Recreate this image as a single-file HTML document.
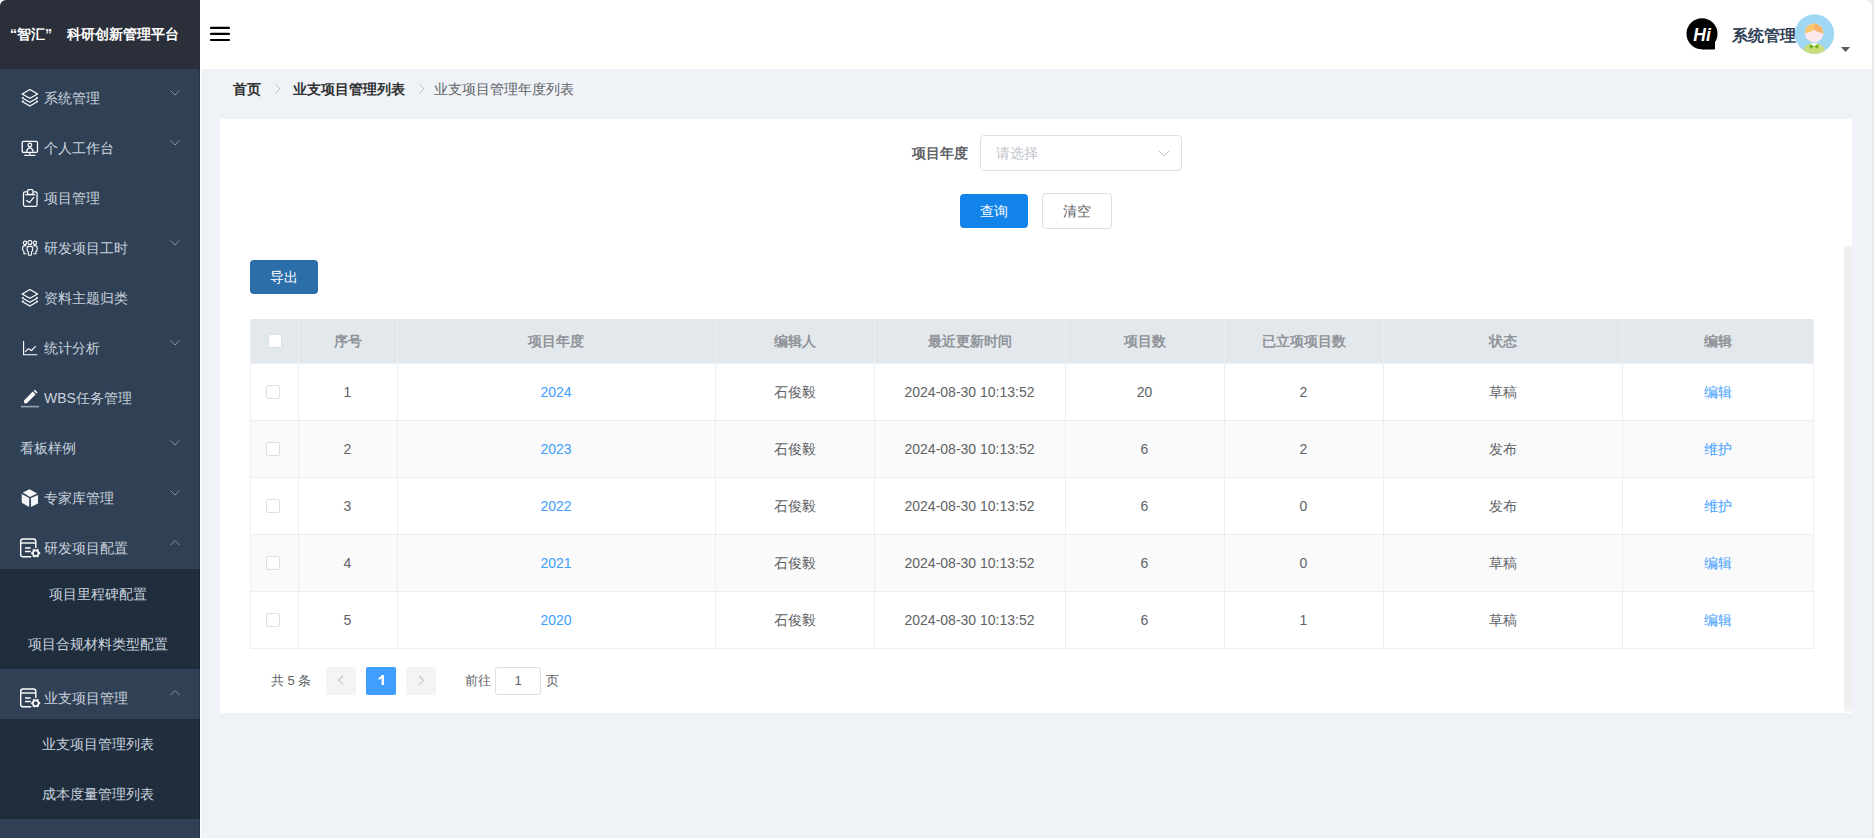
<!DOCTYPE html>
<html><head><meta charset="utf-8">
<style>
*{box-sizing:border-box;margin:0;padding:0}
html,body{width:1875px;height:838px;overflow:hidden}
body{font-family:"Liberation Sans",sans-serif;font-size:14px;background:#eff2f6;position:relative;color:#606266}
.abs{position:absolute}
.t{color:#c9d2dd;line-height:50px;white-space:nowrap;font-size:14px}
.st{left:0;width:195px;text-align:center}
.th{text-align:center;font-weight:bold;color:#909399;white-space:nowrap}
.td{text-align:center;color:#606266;white-space:nowrap}
.link{color:#409eff}
.bc{line-height:40px;white-space:nowrap;font-size:14px}
</style></head><body>
<div class="abs" style="left:0;top:0;width:200px;height:838px;background:#304156"></div>
<div class="abs" style="left:0;top:0;width:10px;height:10px;background:#fff"></div><div class="abs" style="left:0;top:0;width:200px;height:69px;background:#2b2f3a;border-top-left-radius:6px"></div>
<div class="abs" style="left:10px;top:0;line-height:68px;color:#fff;font-weight:bold;white-space:nowrap">“智汇”</div><div class="abs" style="left:67px;top:0;line-height:68px;color:#fff;font-weight:bold;white-space:nowrap">科研创新管理平台</div>
<div class="abs" style="left:200px;top:69px;width:1px;height:769px;background:#fff"></div>
<div class="abs t" style="left:44px;top:73px">系统管理</div><svg class="abs" style="left:21px;top:89px" width="18" height="19" viewBox="0 0 18 19" ><g fill="none" stroke="#fff" stroke-width="1.2" stroke-linejoin="round"><path d="M8.9 0.5 L16.6 4.9 L8.9 9.3 L1.2 4.9 Z"/><path d="M2.6 8.2 L1.2 9 L8.9 13.3 L16.6 9 L15.2 8.2"/><path d="M2.6 11.8 L1.2 12.6 L8.9 16.9 L16.6 12.6 L15.2 11.8"/></g></svg><svg class="abs" style="left:169.5px;top:89.5px" width="10" height="6" viewBox="0 0 10 6" ><path d="M0.5 0.5 L5 5 L9.5 0.5" fill="none" stroke="#8192a6" stroke-width="1"/></svg><div class="abs t" style="left:44px;top:123px">个人工作台</div><svg class="abs" style="left:21px;top:140px" width="18" height="17" viewBox="0 0 18 17" ><g fill="none" stroke="#fff" stroke-width="1.3"><rect x="1.2" y="1.3" width="15.3" height="11" rx="1.3"/><circle cx="8.85" cy="5" r="1.8"/><path d="M5.4 11.8 Q6.4 8.3 8.85 7.6 Q11.3 8.3 12.3 11.8"/><path d="M8.85 12.5 V14.6"/><path d="M3.2 15.3 H14.5" stroke-width="1.2"/></g></svg><svg class="abs" style="left:169.5px;top:139.5px" width="10" height="6" viewBox="0 0 10 6" ><path d="M0.5 0.5 L5 5 L9.5 0.5" fill="none" stroke="#8192a6" stroke-width="1"/></svg><div class="abs t" style="left:44px;top:173px">项目管理</div><svg class="abs" style="left:22px;top:189px" width="17" height="19" viewBox="0 0 17 19" ><g fill="none" stroke="#fff" stroke-width="1.25" stroke-linejoin="round"><path d="M5.6 2.85 H3 Q1.5 2.85 1.5 4.35 V15.85 Q1.5 17.35 3 17.35 H13.55 Q15.05 17.35 15.05 15.85 V4.35 Q15.05 2.85 13.55 2.85 H11"/><rect x="5.6" y="0.65" width="5.4" height="4.6" rx="1"/><path d="M3.2 5.7 H13.2"/><path d="M4.2 11.3 L7.5 13.6 L11.9 8.1"/></g></svg><div class="abs t" style="left:44px;top:223px">研发项目工时</div><svg class="abs" style="left:22px;top:240px" width="17" height="17" viewBox="0 0 17 17" ><g fill="none" stroke="#fff" stroke-width="1.1"><circle cx="3" cy="2.8" r="1.7"/><circle cx="7.9" cy="2.5" r="2"/><circle cx="12.9" cy="2.8" r="1.7"/><path d="M6.6 15.3 L6.2 12 Q5 10.8 5 8.8 Q5 6.1 7.9 6.1 Q10.8 6.1 10.8 8.8 Q10.8 10.8 9.6 12 L9.2 15.3 Z"/><path d="M4.5 6 Q3.8 5.6 3 5.6 Q0.5 5.6 0.5 8.5 Q0.5 10.5 1.9 11.6 V13.7 H4.6"/><path d="M11.3 6 Q12 5.6 12.8 5.6 Q15.3 5.6 15.3 8.5 Q15.3 10.5 13.9 11.6 V13.7 H11.2"/></g></svg><svg class="abs" style="left:169.5px;top:239.5px" width="10" height="6" viewBox="0 0 10 6" ><path d="M0.5 0.5 L5 5 L9.5 0.5" fill="none" stroke="#8192a6" stroke-width="1"/></svg><div class="abs t" style="left:44px;top:273px">资料主题归类</div><svg class="abs" style="left:21px;top:289px" width="18" height="19" viewBox="0 0 18 19" ><g fill="none" stroke="#fff" stroke-width="1.2" stroke-linejoin="round"><path d="M8.9 0.5 L16.6 4.9 L8.9 9.3 L1.2 4.9 Z"/><path d="M2.6 8.2 L1.2 9 L8.9 13.3 L16.6 9 L15.2 8.2"/><path d="M2.6 11.8 L1.2 12.6 L8.9 16.9 L16.6 12.6 L15.2 11.8"/></g></svg><div class="abs t" style="left:44px;top:323px">统计分析</div><svg class="abs" style="left:23px;top:341px" width="15" height="15" viewBox="0 0 15 15" ><g fill="none" stroke="#fff" stroke-width="1.15"><path d="M0.6 0 V13.7 H14.2"/><path d="M2.2 10.9 L5.4 7.7 L8.6 9.5 L12.7 5.2"/></g></svg><svg class="abs" style="left:169.5px;top:339.5px" width="10" height="6" viewBox="0 0 10 6" ><path d="M0.5 0.5 L5 5 L9.5 0.5" fill="none" stroke="#8192a6" stroke-width="1"/></svg><div class="abs t" style="left:44px;top:373px">WBS任务管理</div><svg class="abs" style="left:21px;top:390px" width="18" height="18" viewBox="0 0 18 18" ><path fill="#fff" d="M3.2 13.2 L3 10.4 L11.8 1.6 L14.6 4.4 L5.8 13.2 Z"/><path fill="#fff" d="M12.6 0.8 L13.6 0 Q14 -0.2 14.4 0.2 L16.2 2 Q16.6 2.4 16.2 2.8 L15.4 3.6 Z"/><rect x="0" y="15.8" width="18" height="1.6" fill="#9aa5b1"/></svg><div class="abs t" style="left:20px;top:423px">看板样例</div><svg class="abs" style="left:169.5px;top:439.5px" width="10" height="6" viewBox="0 0 10 6" ><path d="M0.5 0.5 L5 5 L9.5 0.5" fill="none" stroke="#8192a6" stroke-width="1"/></svg><div class="abs t" style="left:44px;top:473px">专家库管理</div><svg class="abs" style="left:21px;top:489px" width="18" height="19" viewBox="0 0 18 19" ><path fill="#f4f5f7" d="M8.5 0.2 L16.2 4.6 L9 8 L1.8 3.6 Z"/><path fill="#f4f5f7" d="M0.7 5 L8.3 9 L8.1 18 L0.8 13.8 Z"/><path fill="#f4f5f7" d="M9.9 9 L17 5.9 L17 14.4 L10 18 Z"/></svg><svg class="abs" style="left:169.5px;top:489.5px" width="10" height="6" viewBox="0 0 10 6" ><path d="M0.5 0.5 L5 5 L9.5 0.5" fill="none" stroke="#8192a6" stroke-width="1"/></svg><div class="abs t" style="left:44px;top:523px">研发项目配置</div><svg class="abs" style="left:20px;top:538px" width="22" height="21" viewBox="0 0 22 21" ><g fill="none" stroke="#fff" stroke-width="1.4"><path d="M11.2 18.7 H3 Q0.7 18.7 0.7 16.4 V3.3 Q0.7 1 3 1 H13.5 Q15.8 1 15.8 3.3 V10"/><path d="M0.7 5 H15.8"/><path d="M5 10 H10.7 M5 13.5 H10.7"/></g><circle cx="15.7" cy="15.2" r="2.8" fill="none" stroke="#fff" stroke-width="1.7"/><path d="M18.90 15.20 L20.20 15.20" stroke="#fff" stroke-width="2"/><path d="M17.30 17.97 L17.95 19.10" stroke="#fff" stroke-width="2"/><path d="M14.10 17.97 L13.45 19.10" stroke="#fff" stroke-width="2"/><path d="M12.50 15.20 L11.20 15.20" stroke="#fff" stroke-width="2"/><path d="M14.10 12.43 L13.45 11.30" stroke="#fff" stroke-width="2"/><path d="M17.30 12.43 L17.95 11.30" stroke="#fff" stroke-width="2"/></svg><svg class="abs" style="left:169.5px;top:540px" width="10" height="6" viewBox="0 0 10 6" ><path d="M0.5 5 L5 0.5 L9.5 5" fill="none" stroke="#8192a6" stroke-width="1"/></svg><div class="abs" style="left:0;top:569px;width:200px;height:100px;background:#1f2d3d"></div><div class="abs t st" style="top:569px">项目里程碑配置</div><div class="abs t st" style="top:619px">项目合规材料类型配置</div><div class="abs t" style="left:44px;top:673px">业支项目管理</div><svg class="abs" style="left:20px;top:688px" width="22" height="21" viewBox="0 0 22 21" ><g fill="none" stroke="#fff" stroke-width="1.4"><path d="M11.2 18.7 H3 Q0.7 18.7 0.7 16.4 V3.3 Q0.7 1 3 1 H13.5 Q15.8 1 15.8 3.3 V10"/><path d="M0.7 5 H15.8"/><path d="M5 10 H10.7 M5 13.5 H10.7"/></g><circle cx="15.7" cy="15.2" r="2.8" fill="none" stroke="#fff" stroke-width="1.7"/><path d="M18.90 15.20 L20.20 15.20" stroke="#fff" stroke-width="2"/><path d="M17.30 17.97 L17.95 19.10" stroke="#fff" stroke-width="2"/><path d="M14.10 17.97 L13.45 19.10" stroke="#fff" stroke-width="2"/><path d="M12.50 15.20 L11.20 15.20" stroke="#fff" stroke-width="2"/><path d="M14.10 12.43 L13.45 11.30" stroke="#fff" stroke-width="2"/><path d="M17.30 12.43 L17.95 11.30" stroke="#fff" stroke-width="2"/></svg><svg class="abs" style="left:169.5px;top:690px" width="10" height="6" viewBox="0 0 10 6" ><path d="M0.5 5 L5 0.5 L9.5 5" fill="none" stroke="#8192a6" stroke-width="1"/></svg><div class="abs" style="left:0;top:719px;width:200px;height:100px;background:#1f2d3d"></div><div class="abs t st" style="top:719px">业支项目管理列表</div><div class="abs t st" style="top:769px">成本度量管理列表</div>
<div class="abs" style="left:199px;top:69px;width:1px;height:769px;background:rgba(0,8,25,0.22)"></div>
<div class="abs" style="left:1860px;top:0;width:12px;height:12px;background:#ececec"></div><div class="abs" style="left:200px;top:0;width:1672px;height:69px;background:#fff;border-top-right-radius:7px"></div>
<svg class="abs" style="left:209px;top:24px" width="22" height="20" viewBox="0 0 22 20"><g stroke="#000" stroke-width="2.1" stroke-linecap="round"><path d="M2 3.9 H20 M2 9.9 H20 M2 16 H20"/></g></svg>
<div class="abs" style="left:1872px;top:0;width:1px;height:838px;background:#e5e5e5"></div><div class="abs" style="left:1873px;top:0;width:1px;height:838px;background:#efefef"></div><div class="abs" style="left:1874px;top:0;width:1px;height:838px;background:#f7f7f7"></div>
<!-- breadcrumb -->
<div class="abs bc" style="left:233px;top:69px;font-weight:bold;color:#303133">首页</div>
<svg class="abs" style="left:274px;top:83px" width="7" height="12" viewBox="0 0 7 12"><path d="M1 1 L6 6 L1 11" fill="none" stroke="#c0c4cc" stroke-width="1"/></svg>
<div class="abs bc" style="left:293px;top:69px;font-weight:bold;color:#303133">业支项目管理列表</div>
<svg class="abs" style="left:418px;top:83px" width="7" height="12" viewBox="0 0 7 12"><path d="M1 1 L6 6 L1 11" fill="none" stroke="#c0c4cc" stroke-width="1"/></svg>
<div class="abs bc" style="left:434px;top:69px;color:#606266">业支项目管理年度列表</div>
<!-- card -->
<div class="abs" style="left:220px;top:119px;width:1632px;height:594px;background:#fff"></div>
<div class="abs" style="left:1844px;top:245px;width:8px;height:467px;background:#f0f0f0;border-radius:4px"></div>
<!-- form -->
<div class="abs" style="left:912px;top:135px;line-height:36px;font-weight:bold;color:#606266">项目年度</div>
<div class="abs" style="left:980px;top:135px;width:202px;height:36px;border:1px solid #dcdfe6;border-radius:4px"></div>
<div class="abs" style="left:996px;top:135px;line-height:36px;color:#c0c4cc">请选择</div>
<svg class="abs" style="left:1158px;top:149.5px" width="12" height="8" viewBox="0 0 12 8"><path d="M1 1 L6 6 L11 1" fill="none" stroke="#c0c4cc" stroke-width="1"/></svg>
<div class="abs" style="left:960px;top:194px;width:68px;height:34px;background:#1283e9;border-radius:4px;color:#fff;text-align:center;line-height:34px">查询</div>
<div class="abs" style="left:1042px;top:193px;width:70px;height:36px;border:1px solid #dcdfe6;border-radius:4px;color:#606266;text-align:center;line-height:34px">清空</div>
<div class="abs" style="left:250px;top:260px;width:68px;height:34px;background:#2c6ea9;border-radius:4px;color:#fff;text-align:center;line-height:34px">导出</div>
<div class="abs" style="left:250px;top:319px;width:1563px;height:44px;background:#e3e8ec"></div><div class="abs" style="left:250px;top:363px;width:1563px;height:57px;background:#fff;border-top:1px solid #ebeef5"></div><div class="abs" style="left:250px;top:420px;width:1563px;height:57px;background:#fafafa;border-top:1px solid #ebeef5"></div><div class="abs" style="left:250px;top:477px;width:1563px;height:57px;background:#fff;border-top:1px solid #ebeef5"></div><div class="abs" style="left:250px;top:534px;width:1563px;height:57px;background:#fafafa;border-top:1px solid #ebeef5"></div><div class="abs" style="left:250px;top:591px;width:1563px;height:57px;background:#fff;border-top:1px solid #ebeef5"></div><div class="abs" style="left:250px;top:319px;width:1564px;height:330px;border:1px solid #ebeef5;border-top:none"></div><div class="abs" style="left:298px;top:319px;width:1px;height:330px;background:#ebeef5"></div><div class="abs" style="left:397px;top:319px;width:1px;height:330px;background:#ebeef5"></div><div class="abs" style="left:715px;top:319px;width:1px;height:330px;background:#ebeef5"></div><div class="abs" style="left:874px;top:319px;width:1px;height:330px;background:#ebeef5"></div><div class="abs" style="left:1065px;top:319px;width:1px;height:330px;background:#ebeef5"></div><div class="abs" style="left:1224px;top:319px;width:1px;height:330px;background:#ebeef5"></div><div class="abs" style="left:1383px;top:319px;width:1px;height:330px;background:#ebeef5"></div><div class="abs" style="left:1622px;top:319px;width:1px;height:330px;background:#ebeef5"></div><div class="abs" style="left:268px;top:334px;width:14px;height:14px;background:#fff;border:1px solid #dcdfe6;border-radius:2px"></div><div class="abs th" style="left:298px;top:319px;width:99px;height:44px;line-height:44px">序号</div><div class="abs th" style="left:397px;top:319px;width:318px;height:44px;line-height:44px">项目年度</div><div class="abs th" style="left:715px;top:319px;width:159px;height:44px;line-height:44px">编辑人</div><div class="abs th" style="left:874px;top:319px;width:191px;height:44px;line-height:44px">最近更新时间</div><div class="abs th" style="left:1065px;top:319px;width:159px;height:44px;line-height:44px">项目数</div><div class="abs th" style="left:1224px;top:319px;width:159px;height:44px;line-height:44px">已立项项目数</div><div class="abs th" style="left:1383px;top:319px;width:239px;height:44px;line-height:44px">状态</div><div class="abs th" style="left:1622px;top:319px;width:191px;height:44px;line-height:44px">编辑</div><div class="abs" style="left:266px;top:385px;width:14px;height:14px;background:#fff;border:1px solid #dcdfe6;border-radius:2px"></div><div class="abs td" style="left:298px;top:364px;width:99px;height:56px;line-height:56px">1</div><div class="abs td link" style="left:397px;top:364px;width:318px;height:56px;line-height:56px">2024</div><div class="abs td" style="left:715px;top:364px;width:159px;height:56px;line-height:56px">石俊毅</div><div class="abs td" style="left:874px;top:364px;width:191px;height:56px;line-height:56px">2024-08-30 10:13:52</div><div class="abs td" style="left:1065px;top:364px;width:159px;height:56px;line-height:56px">20</div><div class="abs td" style="left:1224px;top:364px;width:159px;height:56px;line-height:56px">2</div><div class="abs td" style="left:1383px;top:364px;width:239px;height:56px;line-height:56px">草稿</div><div class="abs td link" style="left:1622px;top:364px;width:191px;height:56px;line-height:56px">编辑</div><div class="abs" style="left:266px;top:442px;width:14px;height:14px;background:#fff;border:1px solid #dcdfe6;border-radius:2px"></div><div class="abs td" style="left:298px;top:421px;width:99px;height:56px;line-height:56px">2</div><div class="abs td link" style="left:397px;top:421px;width:318px;height:56px;line-height:56px">2023</div><div class="abs td" style="left:715px;top:421px;width:159px;height:56px;line-height:56px">石俊毅</div><div class="abs td" style="left:874px;top:421px;width:191px;height:56px;line-height:56px">2024-08-30 10:13:52</div><div class="abs td" style="left:1065px;top:421px;width:159px;height:56px;line-height:56px">6</div><div class="abs td" style="left:1224px;top:421px;width:159px;height:56px;line-height:56px">2</div><div class="abs td" style="left:1383px;top:421px;width:239px;height:56px;line-height:56px">发布</div><div class="abs td link" style="left:1622px;top:421px;width:191px;height:56px;line-height:56px">维护</div><div class="abs" style="left:266px;top:499px;width:14px;height:14px;background:#fff;border:1px solid #dcdfe6;border-radius:2px"></div><div class="abs td" style="left:298px;top:478px;width:99px;height:56px;line-height:56px">3</div><div class="abs td link" style="left:397px;top:478px;width:318px;height:56px;line-height:56px">2022</div><div class="abs td" style="left:715px;top:478px;width:159px;height:56px;line-height:56px">石俊毅</div><div class="abs td" style="left:874px;top:478px;width:191px;height:56px;line-height:56px">2024-08-30 10:13:52</div><div class="abs td" style="left:1065px;top:478px;width:159px;height:56px;line-height:56px">6</div><div class="abs td" style="left:1224px;top:478px;width:159px;height:56px;line-height:56px">0</div><div class="abs td" style="left:1383px;top:478px;width:239px;height:56px;line-height:56px">发布</div><div class="abs td link" style="left:1622px;top:478px;width:191px;height:56px;line-height:56px">维护</div><div class="abs" style="left:266px;top:556px;width:14px;height:14px;background:#fff;border:1px solid #dcdfe6;border-radius:2px"></div><div class="abs td" style="left:298px;top:535px;width:99px;height:56px;line-height:56px">4</div><div class="abs td link" style="left:397px;top:535px;width:318px;height:56px;line-height:56px">2021</div><div class="abs td" style="left:715px;top:535px;width:159px;height:56px;line-height:56px">石俊毅</div><div class="abs td" style="left:874px;top:535px;width:191px;height:56px;line-height:56px">2024-08-30 10:13:52</div><div class="abs td" style="left:1065px;top:535px;width:159px;height:56px;line-height:56px">6</div><div class="abs td" style="left:1224px;top:535px;width:159px;height:56px;line-height:56px">0</div><div class="abs td" style="left:1383px;top:535px;width:239px;height:56px;line-height:56px">草稿</div><div class="abs td link" style="left:1622px;top:535px;width:191px;height:56px;line-height:56px">编辑</div><div class="abs" style="left:266px;top:613px;width:14px;height:14px;background:#fff;border:1px solid #dcdfe6;border-radius:2px"></div><div class="abs td" style="left:298px;top:592px;width:99px;height:56px;line-height:56px">5</div><div class="abs td link" style="left:397px;top:592px;width:318px;height:56px;line-height:56px">2020</div><div class="abs td" style="left:715px;top:592px;width:159px;height:56px;line-height:56px">石俊毅</div><div class="abs td" style="left:874px;top:592px;width:191px;height:56px;line-height:56px">2024-08-30 10:13:52</div><div class="abs td" style="left:1065px;top:592px;width:159px;height:56px;line-height:56px">6</div><div class="abs td" style="left:1224px;top:592px;width:159px;height:56px;line-height:56px">1</div><div class="abs td" style="left:1383px;top:592px;width:239px;height:56px;line-height:56px">草稿</div><div class="abs td link" style="left:1622px;top:592px;width:191px;height:56px;line-height:56px">编辑</div>
<!-- pagination -->
<div class="abs" style="left:271px;top:667px;line-height:28px;font-size:13px;color:#606266;white-space:nowrap">共 5 条</div>
<div class="abs" style="left:326px;top:667px;width:30px;height:28px;background:#f4f4f5;border-radius:2px"></div>
<svg class="abs" style="left:336.7px;top:674.8px" width="7" height="11" viewBox="0 0 7 11"><path d="M6 1 L1.5 5.3 L6 9.6" fill="none" stroke="#c0c4cc" stroke-width="1.1"/></svg>
<div class="abs" style="left:366px;top:667px;width:30px;height:28px;background:#409eff;border-radius:2px"></div><svg class="abs" style="left:366px;top:667px" width="30" height="28" viewBox="0 0 30 28"><path d="M15.6 8 H18 V18 H15.6 V11.3 Q14.3 12.5 12.6 13.1 V10.9 Q14.6 10.1 15.6 8 Z" fill="#fff"/></svg>
<div class="abs" style="left:406px;top:667px;width:30px;height:28px;background:#f4f4f5;border-radius:2px"></div>
<svg class="abs" style="left:418px;top:674.8px" width="7" height="11" viewBox="0 0 7 11"><path d="M1 1 L5.5 5.3 L1 9.6" fill="none" stroke="#c0c4cc" stroke-width="1.1"/></svg>
<div class="abs" style="left:465px;top:667px;line-height:28px;font-size:13px;color:#606266">前往</div>
<div class="abs" style="left:495px;top:667px;width:46px;height:28px;border:1px solid #dcdfe6;border-radius:3px;text-align:center;line-height:26px;font-size:13px;color:#606266">1</div>
<div class="abs" style="left:546px;top:667px;line-height:28px;font-size:13px;color:#606266">页</div>
<!-- header right -->
<svg class="abs" style="left:1686px;top:18px" width="33" height="33" viewBox="0 0 33 33"><circle cx="16" cy="15.7" r="15.5" fill="#000"/><path d="M16 24 H29 V30.6 Q29 31.5 28.1 31.5 H16 Z" fill="#000"/><text x="16" y="22.6" text-anchor="middle" font-family="Liberation Sans" font-weight="bold" font-style="italic" font-size="17.5" fill="#fff">Hi</text></svg>
<div class="abs" style="left:1732px;top:19px;line-height:34px;font-size:16px;font-weight:bold;color:#304156;white-space:nowrap">系统管理</div>
<svg class="abs" style="left:1794px;top:14px" width="41" height="41" viewBox="0 0 41 41"><defs><clipPath id="avc"><circle cx="20.5" cy="20" r="19.7"/></clipPath><clipPath id="facec"><circle cx="20.1" cy="18.9" r="9.3"/></clipPath></defs><circle cx="20.5" cy="20" r="19.7" fill="#a0d7f3"/><g clip-path="url(#avc)"><path d="M8.9 41 V38 Q9.8 29.2 20.1 29.2 Q30.4 29.2 31.3 38 V41 Z" fill="#c9df7b"/><path d="M16.3 29.3 L20.1 32.6 L23.9 29.3 Z" fill="#fff"/><path d="M15.8 30.3 L20.1 32.6 L15.8 34.9 Z M24.3 30.3 L20.1 32.6 L24.3 34.9 Z" fill="#72af1c"/><circle cx="20.1" cy="18.9" r="9.3" fill="#fce8ea"/><g clip-path="url(#facec)"><path d="M10 9 H20.1 V15.8 Q15.5 19 10 19.8 Z" fill="#f9c96d"/><path d="M20.1 9 H30.5 V19.8 Q24.7 19 20.1 15.8 Z" fill="#f5b469"/></g></g></svg>
<svg class="abs" style="left:1841px;top:47px" width="9" height="5" viewBox="0 0 9 5"><path d="M0 0 H9 L4.5 5 Z" fill="#5a5a5a"/></svg>
</body></html>
